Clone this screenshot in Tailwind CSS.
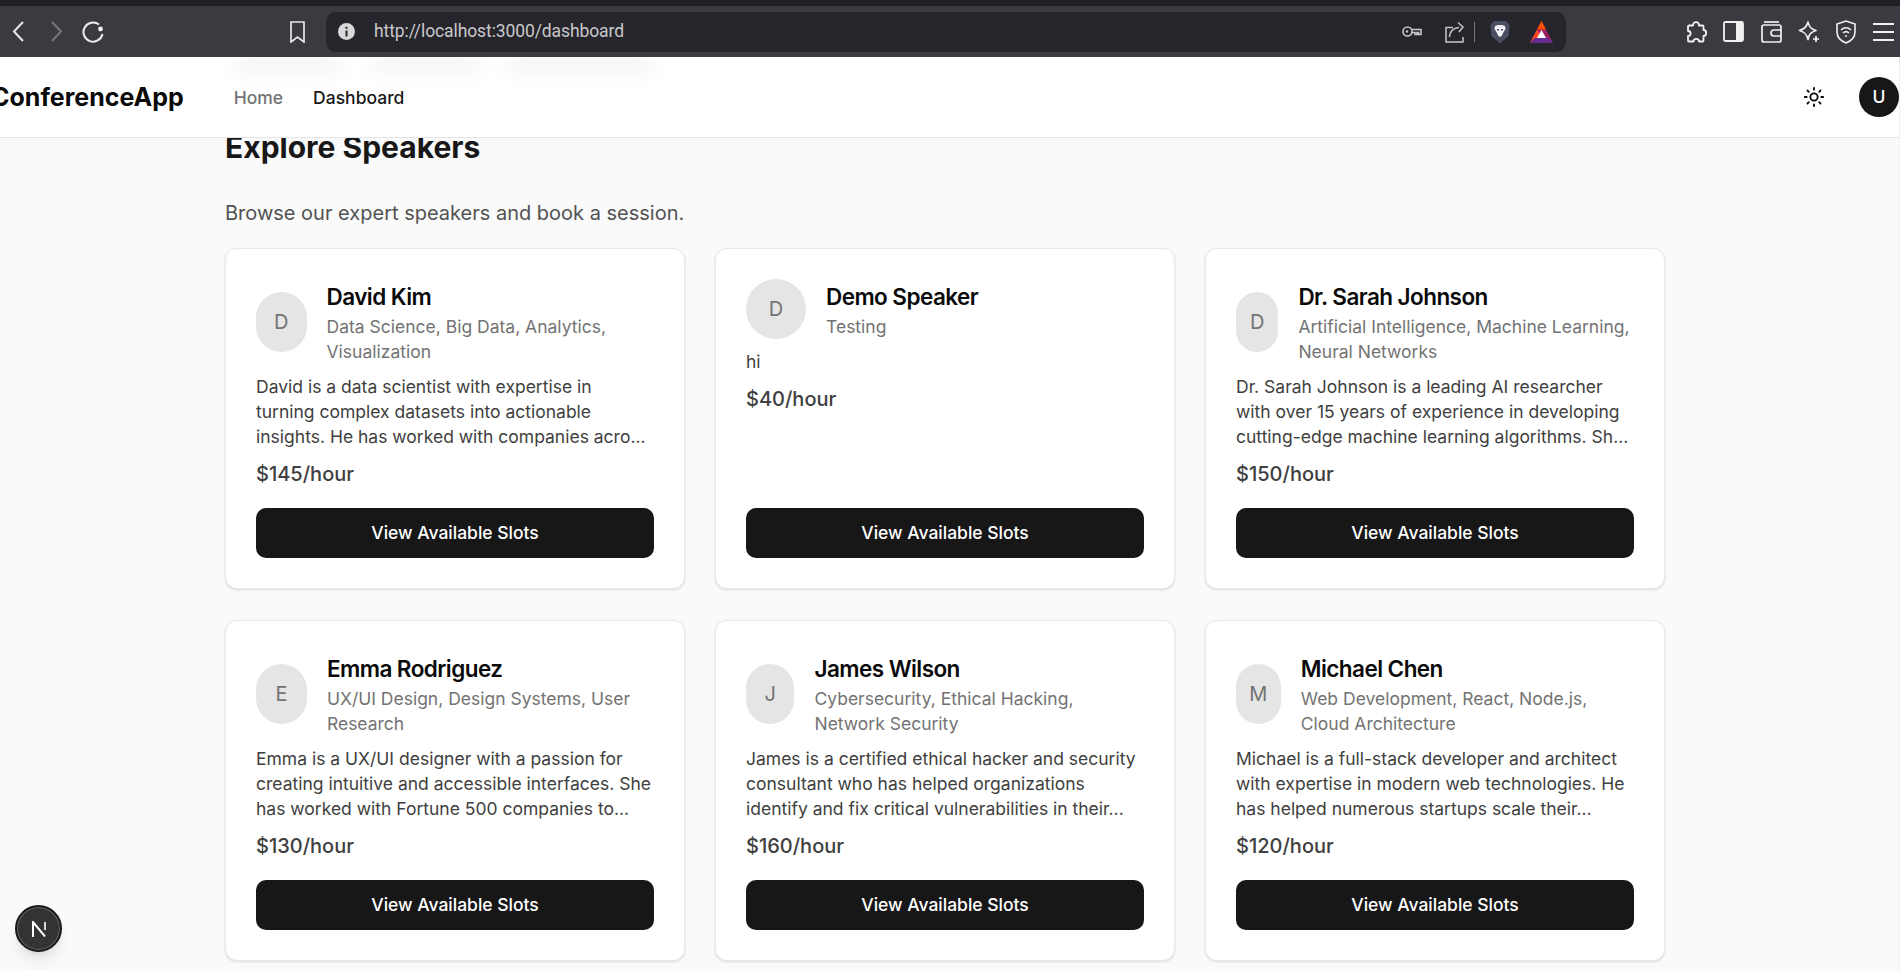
<!DOCTYPE html>
<html lang="en">
<head>
    <meta charset="UTF-8">
    <meta name="viewport" content="width=device-width, initial-scale=1.0">
    <title>Dashboard</title>
    <script src="https://cdn.jsdelivr.net/npm/@tailwindcss/browser@4"></script>
</head>
<body class="h-screen overflow-hidden flex flex-col bg-[#fafafa] font-['Inter',sans-serif]">
    <!-- Browser chrome -->
    <div class="h-[6px] shrink-0 bg-[#202025]"></div>
    <div class="h-[51px] shrink-0 bg-[#3b3a40] flex items-center text-white">
        <svg class="ml-[12px] w-[12px] h-[21px]" viewBox="0 0 12 21" fill="none" stroke="#e8e8e8" stroke-width="2"><path d="M11 1 2 10.5 11 20"/></svg>
        <svg class="ml-[27px] w-[12px] h-[21px]" viewBox="0 0 12 21" fill="none" stroke="#77777b" stroke-width="2"><path d="M1 1 10 10.5 1 20"/></svg>
        <svg class="ml-[19px] w-[23px] h-[23px]" viewBox="0 0 23 23" fill="none" stroke="#eeeeee" stroke-width="2"><path d="M17 4.500A9.600 9.600 0 1 0 20.500 14"/><circle cx="18.500" cy="9" r="2.400" fill="#eeeeee" stroke="none"/></svg>
        <svg class="ml-[185px] w-[15px] h-[22px]" viewBox="0 0 15 22" fill="none" stroke="#e8e8e8" stroke-width="1.700"><path d="M1 1h13v20l-6.500-5L1 21z"/></svg>
        <div class="ml-[21px] w-[1240px] h-[40px] bg-[#26252b] rounded-[10px] flex items-center">
            <svg class="ml-[12px] w-[17px] h-[17px]" viewBox="0 0 17 17"><circle cx="8.500" cy="8.500" r="8.500" fill="#d8d8d8"/><rect x="7.500" y="7.500" width="2" height="6" fill="#26252b"/><rect x="7.500" y="3.800" width="2" height="2" fill="#26252b"/></svg>
            <span class="ml-[19px] text-[17.5px] tracking-[-0.1px] text-[#c9c9cc] font-['Roboto',sans-serif]">http://localhost:3000/dashboard</span>
            <svg class="ml-auto w-[20px] h-[13px]" viewBox="0 0 20 13" fill="none" stroke="#c8c8c8" stroke-width="1.600"><circle cx="5.500" cy="6.500" r="4.500"/><circle cx="5" cy="6.500" r="1.200" fill="#c8c8c8" stroke="none"/><path d="M10 4.500h9v5h-2.500v-2h-1.500v2h-2v-2H10"/></svg>
            <svg class="ml-[23px] w-[19px] h-[22px]" viewBox="0 0 19 22" fill="none" stroke="#c8c8c8" stroke-width="1.500"><path d="M8 6.500H1v14.500h17v-5"/><path d="M4.500 16c.5-6 4.500-9 9.500-9.500"/><path d="M13 1.500 18 6l-4 5"/></svg>
            <div class="ml-[10px] w-px h-[20px] bg-[#77777b]"></div>
            <svg class="ml-[15px] w-[20px] h-[24px]" viewBox="0 0 20 24"><path d="M4 1h12l3.500 4-1 11-8.500 7.500L1.500 16l-1-11z" fill="#4b4e63"/><path d="M5 6l3-1h4l3 1 .5 3-2.500 4-1 2.500-2 1.500-2-1.500-1-2.500L4.500 9z" fill="#f2f2f4"/><rect x="7" y="9" width="2" height="1.500" fill="#4b4e63"/><rect x="11" y="9" width="2" height="1.500" fill="#4b4e63"/></svg>
            <svg class="ml-[20px] w-[23px] h-[22px]" viewBox="0 0 23 22"><path d="M11.500 0 23 22H0z" fill="#9e1f63"/><path d="M11.500 0 16 8.500H7z" fill="#ff5000"/><path d="M0 22 7 8.500 11.500 15.500 4.500 22z" fill="#ff4724"/><path d="M23 22H0l4.500-5h14z" fill="#662d91"/><path d="M11.500 9 16 17H7z" fill="#ffffff"/></svg>
            <div class="w-[13px]"></div>
        </div>
        <svg class="ml-[120px] w-[21px] h-[22px]" viewBox="0 0 21 22" fill="none" stroke="#f0f0f0" stroke-width="1.800" stroke-linejoin="round"><path d="M7 4.500C7 0 13 0 13 4.500h3.500a1 1 0 0 1 1 1V9c3.500 0 3.500 6 0 6v4.500a1 1 0 0 1-1 1H13c0-3.500-5.500-3.500-5.500 0H3a1 1 0 0 1-1-1V15c3.500 0 3.500-5 0-5V5.500a1 1 0 0 1 1-1z"/></svg>
        <svg class="ml-[16px] w-[21px] h-[21px]" viewBox="0 0 21 21"><rect x="1" y="1" width="19" height="19" rx="1.500" fill="none" stroke="#f0f0f0" stroke-width="1.800"/><rect x="13" y="1" width="7" height="19" fill="#f0f0f0"/></svg>
        <svg class="ml-[17px] w-[21px] h-[22px]" viewBox="0 0 21 22" fill="none" stroke="#f0f0f0" stroke-width="1.700"><path d="M3 1h15"/><rect x="1" y="4" width="19" height="17" rx="2"/><path d="M20 9h-7a3 3 0 0 0 0 6h7"/></svg>
        <svg class="ml-[16px] w-[22px] h-[22px]" viewBox="0 0 22 22" fill="none" stroke="#f0f0f0" stroke-width="1.700" stroke-linejoin="round"><path d="M10 1c1 5 3 7 8 8.500-5 1.500-7 3.500-8 9-1-5.500-3.500-7.500-8.500-9C6.500 8 9 6 10 1z"/><path d="M18 15v6M15 18h6"/></svg>
        <svg class="ml-[16px] w-[20px] h-[24px]" viewBox="0 0 20 24" fill="none" stroke="#f0f0f0" stroke-width="1.600"><path d="M10 1l9 3v8c0 5-4 9-9 11-5-2-9-6-9-11V4z"/><path d="M5 10c3-3 7-3 10 0M7 13c2-1.800 4-1.800 6 0"/><circle cx="10" cy="16" r="1" fill="#f0f0f0" stroke="none"/></svg>
        <svg class="ml-[17px] w-[21px] h-[20px]" viewBox="0 0 21 20" stroke="#f0f0f0" stroke-width="1.800"><path d="M0 2h21M0 10h21M0 18h21"/></svg>
    </div>

    <!-- Site nav -->
    <nav class="relative h-[81px] shrink-0 overflow-hidden bg-white border-b border-[#e5e5e5] flex items-center pr-px">
        <div class="absolute left-[236px] top-0 w-[104px] h-[12px] bg-neutral-300/40 blur-[10px]"></div>
        <div class="absolute left-[374px] top-0 w-[104px] h-[12px] bg-neutral-300/40 blur-[10px]"></div>
        <div class="absolute left-[508px] top-0 w-[144px] h-[12px] bg-neutral-300/40 blur-[10px]"></div>
        <span class="relative -ml-[9px] text-[25px] leading-[35px] font-bold text-[#0a0a0a]">ConferenceApp</span>
        <a class="relative ml-[50px] pt-[2px] text-[17.5px] font-medium text-[#737373]">Home</a>
        <a class="relative ml-[30px] pt-[2px] text-[17.5px] font-medium text-[#171717]">Dashboard</a>
        <svg class="relative ml-auto w-[22px] h-[22px]" viewBox="0 0 24 24" fill="none" stroke="#0a0a0a" stroke-width="2" stroke-linecap="round"><circle cx="12" cy="12" r="4"/><path d="M12 2v2M12 20v2M4.900 4.900l1.400 1.400M17.700 17.700l1.400 1.400M2 12h2M20 12h2M6.300 17.700l-1.400 1.400M19.100 4.900l-1.400 1.400"/></svg>
        <div class="relative ml-[34px] w-[40px] h-[40px] rounded-full bg-[#171717] text-white flex items-center justify-center text-[17.5px] font-medium">U</div>
    </nav>

    <!-- Dashboard content -->
    <main class="flex-1 overflow-hidden pl-[225px] pr-[235px]">
        <h1 class="-mt-[13px] text-[30px] leading-[45px] font-bold text-[#171717]">Explore Speakers</h1>
        <p class="mt-[29px] mb-[21px] text-[20px] leading-[28px] text-[#525252]">Browse our expert speakers and book a session.</p>
        <div id="speakers" class="grid grid-cols-3 gap-x-[30px] gap-y-[31px]"></div>
    </main>

    <!-- Scrollbar sliver on the right edge -->
    <div class="absolute right-0 top-[57px] bottom-0 w-px bg-[#eeeeee]"></div>

    <!-- Next.js dev indicator -->
    <div class="absolute left-[15px] top-[905px] w-[47px] h-[47px] rounded-full bg-[#333333] border-2 border-[#1a1a1a] ring-1 ring-[#666666] ring-inset shadow-lg flex items-center justify-center">
        <svg class="w-[16px] h-[16px]" viewBox="0 0 16 16" fill="none" stroke="#ffffff" stroke-width="2"><path d="M2 16V1L14 15.500"/><path d="M14 1v8" stroke="#ffffff" stroke-opacity="0.800"/></svg>
    </div>

    <script>
        const speakers = [
            { name: 'David Kim', topics: 'Data Science, Big Data, Analytics, Visualization', bio: 'David is a data scientist with expertise in turning complex datasets into actionable insights. He has worked with companies acro...', rate: 145 },
            { name: 'Demo Speaker', topics: 'Testing', bio: 'hi', rate: 40 },
            { name: 'Dr. Sarah Johnson', topics: 'Artificial Intelligence, Machine Learning, Neural Networks', bio: 'Dr. Sarah Johnson is a leading AI researcher with over 15 years of experience in developing cutting-edge machine learning algorithms. Sh...', rate: 150 },
            { name: 'Emma Rodriguez', topics: 'UX/UI Design, Design Systems, User Research', bio: 'Emma is a UX/UI designer with a passion for creating intuitive and accessible interfaces. She has worked with Fortune 500 companies to...', rate: 130 },
            { name: 'James Wilson', topics: 'Cybersecurity, Ethical Hacking, Network Security', bio: 'James is a certified ethical hacker and security consultant who has helped organizations identify and fix critical vulnerabilities in their...', rate: 160 },
            { name: 'Michael Chen', topics: 'Web Development, React, Node.js, Cloud Architecture', bio: 'Michael is a full-stack developer and architect with expertise in modern web technologies. He has helped numerous startups scale their...', rate: 120 },
        ];

        const container = document.getElementById('speakers');
        speakers.forEach(s => {
            container.innerHTML += `
                <div class="flex flex-col p-[30px] bg-white border border-[#e9e9e9] rounded-[12px] shadow-sm">
                    <div class="flex items-center gap-[20px] mb-[10px]">
                        <div class="w-[60px] h-[60px] rounded-full bg-[#e5e5e5] text-[#737373] text-[20px] flex items-center justify-center">${s.name[0]}</div>
                        <div>
                            <h3 class="text-[22.5px] leading-[35px] font-semibold tracking-tight text-[#0a0a0a]">${s.name}</h3>
                            <p class="text-[17.5px] leading-[25px] text-[#737373]">${s.topics}</p>
                        </div>
                    </div>
                    <p class="text-[17.5px] leading-[25px] text-[#404040]">${s.bio}</p>
                    <p class="mt-[11px] mb-[20px] text-[20px] leading-[28px] font-medium text-[#404040]">$${s.rate}/hour</p>
                    <button class="mt-auto h-[50px] rounded-[10px] bg-[#171717] text-white text-[17.5px] font-medium">View Available Slots</button>
                </div>`;
        });
    </script>
</body>
</html>
